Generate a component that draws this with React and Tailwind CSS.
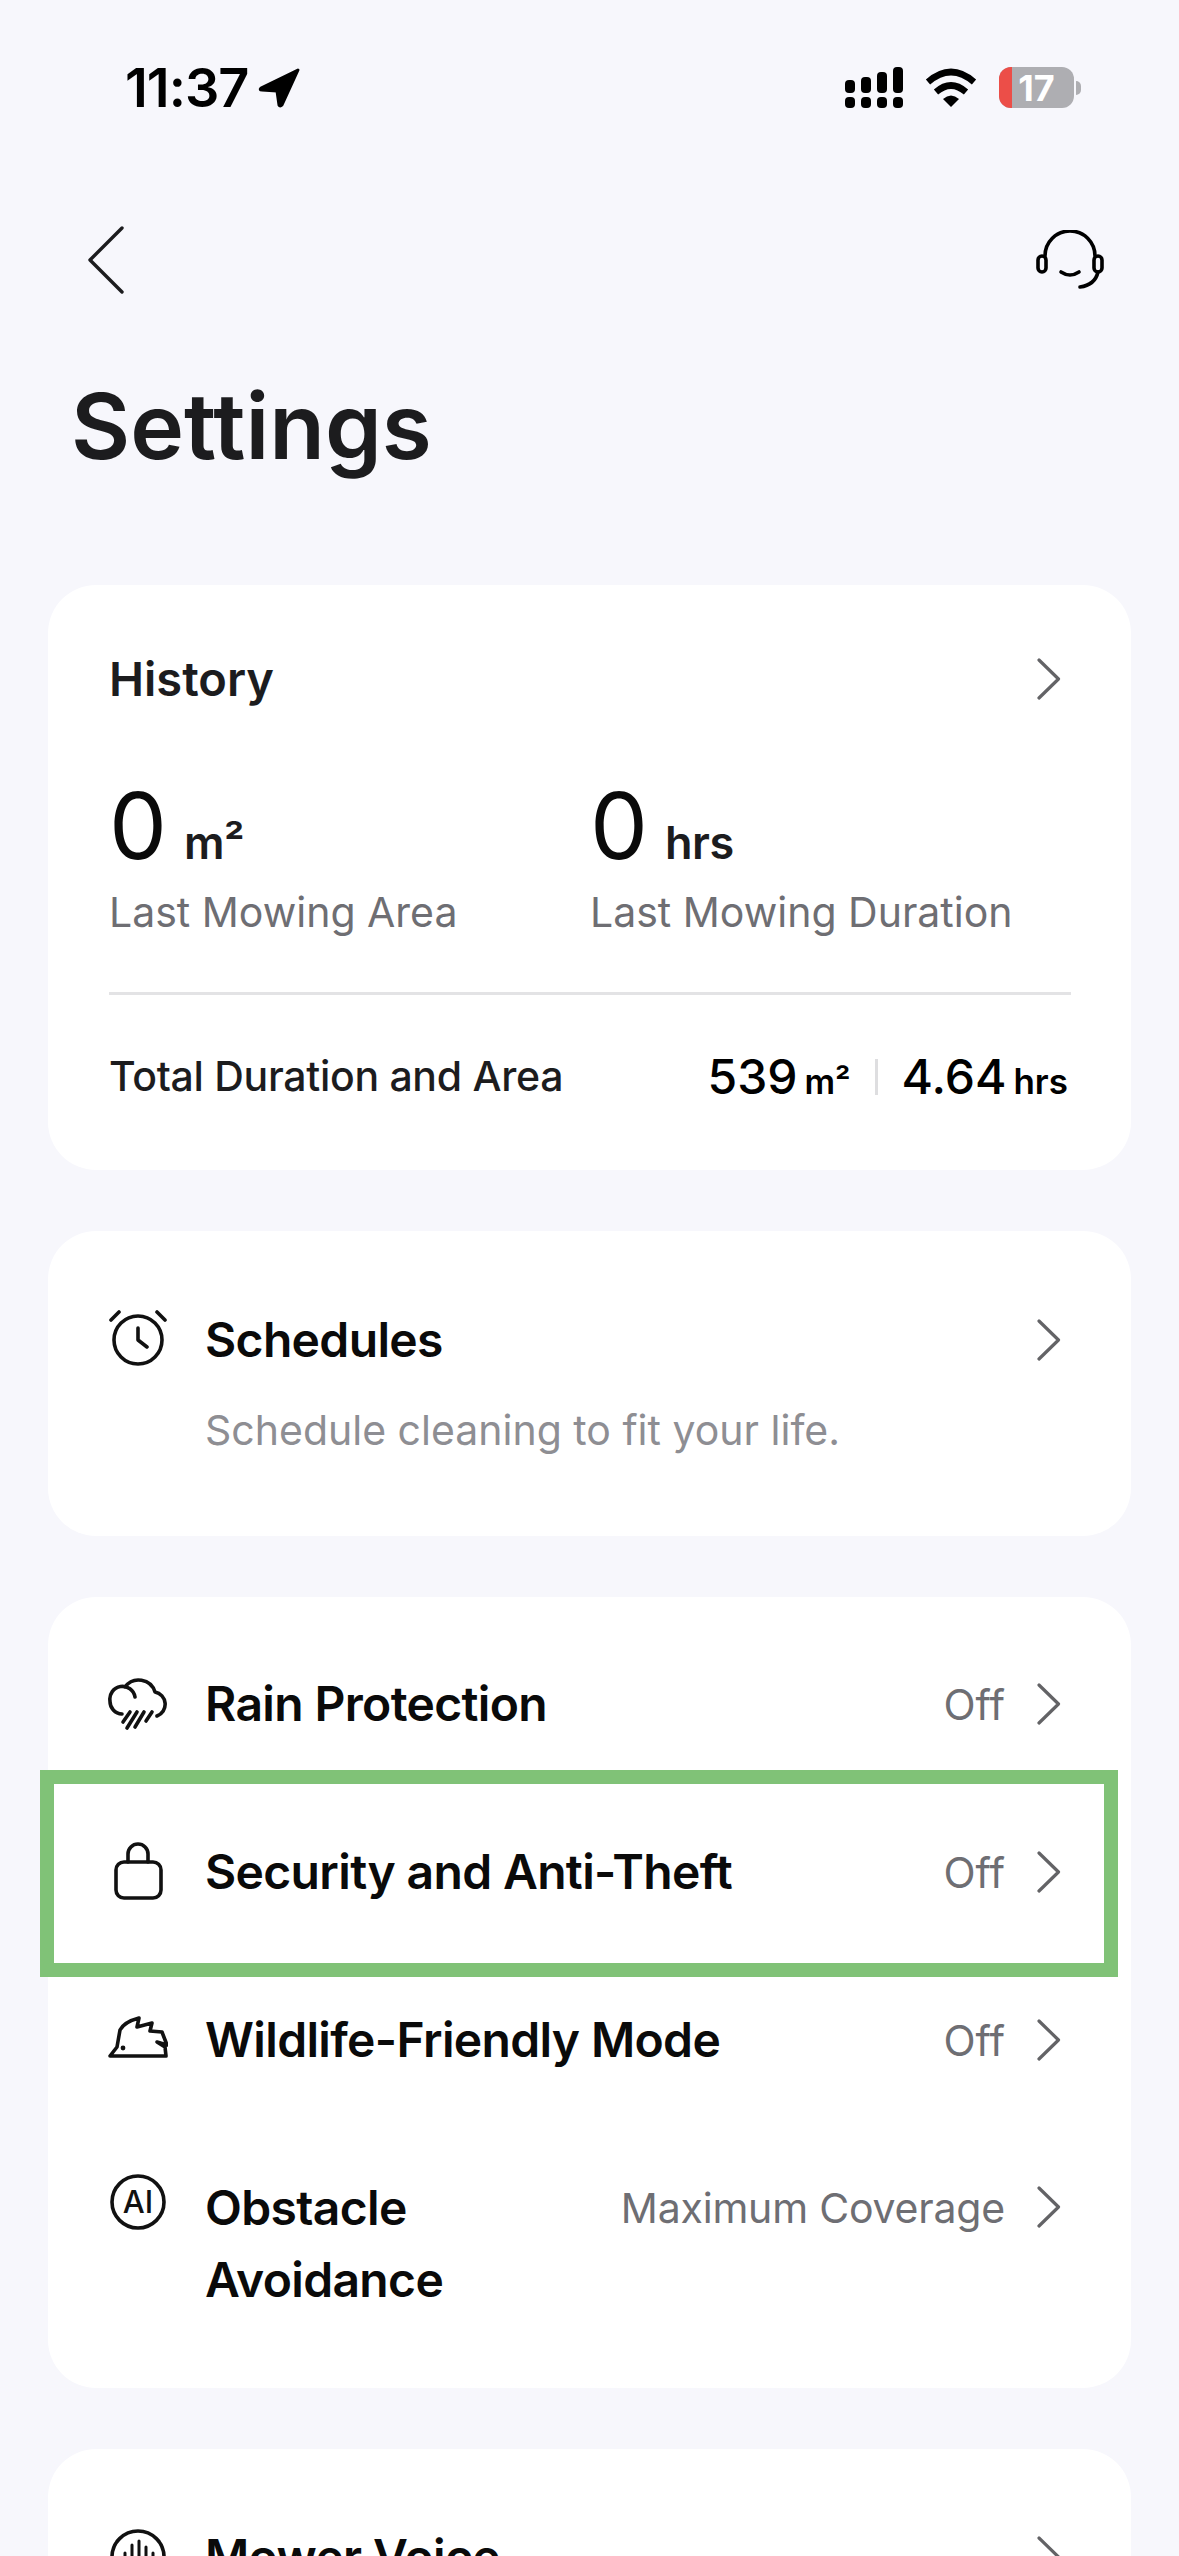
import React from "react";

const Chevron = ({ className = "" }) => (
  <svg width="26" height="42" viewBox="0 0 26 42" fill="none" className={"shrink-0 " + className}>
    <path d="M3 2 L22.5 21 L3 40" stroke="#636366" strokeWidth="3.2" strokeLinecap="round" strokeLinejoin="round" />
  </svg>
);

const I = ({ children }) => (
  <svg width="60" height="60" viewBox="0 0 60 60" fill="none" stroke="#111" strokeWidth="3.6" strokeLinecap="round" strokeLinejoin="round" className="shrink-0">
    {children}
  </svg>
);

const Alarm = () => (
  <I>
    <circle cx="30" cy="30" r="24" />
    <path d="M3 10 L11 2 M49 2 L57 10 M30 18 V30 L39 37" />
  </I>
);
const Rain = () => (
  <I>
    <path d="M14 40 A12.5 12.5 0 0 1 2 27 A12.5 12.5 0 0 1 27 23 M17 13 A17 17 0 0 1 47 18 A12.5 12.5 0 0 1 49 42" />
    <path d="M22 38 L15 48 M29 38 L19 54 M36 38 L27 53 M44 38 L38 47" />
  </I>
);
const Lock = () => (
  <I>
    <rect x="8" y="20" width="45" height="36" rx="8" />
    <path d="M20 20 V12 A10 10 0 0 1 40 12 V20" />
  </I>
);
const Hedgehog = () => (
  <I>
    <path d="M2 46 L9 37 L12 20 Q16 12 31 8 L29 17 L44 13 L42 21 L54 22 L59 35 L49 32 L57 37 L58 46 Z" />
    <circle cx="15" cy="38" r="2.4" fill="#111" stroke="none" />
  </I>
);
const Ai = () => (
  <svg width="60" height="60" viewBox="0 0 60 60" fill="none" className="shrink-0">
    <circle cx="30" cy="30" r="26" stroke="#111" strokeWidth="3.6" />
    <text x="30" y="41" textAnchor="middle" fontFamily="Inter" fontSize="31" fontWeight="500" fill="#111">AI</text>
  </svg>
);
const Voice = () => (
  <I>
    <circle cx="30" cy="30" r="26" />
    <path d="M17 26 V38 M24 18 V42 M31 14 V46 M38 20 V42 M45 26 V36" strokeWidth="3" />
  </I>
);

const Row = ({ icon, title, value }) => (
  <div className="flex h-[168px] items-center pl-[60px] pr-[69px]">
    {icon}
    <span className="ml-[37px] text-[48px] font-semibold leading-[72px] tracking-[-0.65px] text-[#0a0a0a]">{title}</span>
    <span className="ml-auto text-[42px] text-[#6e6e73]">{value}</span>
    <Chevron className="ml-[31px]" />
  </div>
);

const Stat = ({ n, u, label, cls }) => (
  <div className={cls}>
    <div className="flex h-[100px] items-baseline">
      <span className="text-[92px] font-normal leading-[100px] text-[#0a0a0a]">{n}</span>
      <span className="ml-[17px] text-[45px] font-semibold tracking-[-0.5px] text-[#1c1c1e]">{u}</span>
    </div>
    <div className="mt-[11px] text-[41px] leading-[50px] text-[#6e6e73]">{label}</div>
  </div>
);

export default function App() {
  return (
    <div className="relative h-[2556px] w-[1179px] overflow-hidden bg-[#f7f7fc] font-['Inter',sans-serif]">
      {/* status bar */}
      <div className="flex h-[174px] items-start justify-between pl-[125px] pr-[98px] pt-[62px]">
        <div className="flex items-center">
          <span className="text-[54px] font-semibold leading-[52px] tracking-[-1px] text-black">11:37</span>
          <svg width="42" height="40" viewBox="0 0 42 40" className="ml-[10px]">
            <path d="M40 2 L3 20 Q1 22 4 22 L19 23 L21 37 Q22 39 24 37 Z" fill="#000" stroke="#000" strokeWidth="3" strokeLinejoin="round" />
          </svg>
        </div>
        <div className="flex items-center pt-[5px]">
          <svg width="58" height="41" viewBox="0 0 58 41">
            <rect x="0" y="13" width="10" height="13" rx="4" />
            <rect x="16" y="10" width="10" height="16" rx="4" />
            <rect x="32" y="5" width="10" height="21" rx="4" />
            <rect x="48" y="0" width="10" height="26" rx="4" />
            <rect x="0" y="30" width="10" height="11" rx="4" />
            <rect x="16" y="30" width="10" height="11" rx="4" />
            <rect x="32" y="30" width="10" height="11" rx="4" />
            <rect x="48" y="30" width="10" height="11" rx="4" />
          </svg>
          <svg width="52" height="40" viewBox="0 0 52 40" fill="none" className="ml-[22px]">
            <path d="M3 14 Q26 -6 49 14" stroke="#000" strokeWidth="6.5" />
            <path d="M11 24 Q26 11 41 24" stroke="#000" strokeWidth="6.5" />
            <path d="M18 31 Q26 24 34 31 L26 39 Z" fill="#000" />
          </svg>
          <div className="relative ml-[22px] flex h-[41px] w-[75px] items-center justify-center overflow-hidden rounded-[12px] bg-[#aeaeb2]">
            <div className="absolute inset-y-0 left-0 w-[13px] bg-[#ec4e48]" />
            <span className="relative text-[36px] font-bold leading-none text-white">17</span>
          </div>
          <div className="ml-[2px] h-[14px] w-[5px] rounded-r-full bg-[#aeaeb2]" />
        </div>
      </div>

      {/* nav */}
      <div className="flex h-[160px] items-start justify-between pl-[88px] pr-[74px] pt-[52px]">
        <svg width="36" height="68" viewBox="0 0 36 68" fill="none">
          <path d="M34 2 L2 34 L34 66" stroke="#1c1c1e" strokeWidth="3.4" strokeLinecap="round" strokeLinejoin="round" />
        </svg>
        <svg width="70" height="60" viewBox="0 0 70 60" fill="none" stroke="#000" strokeWidth="3.6" strokeLinecap="round" className="mt-[4px]">
          <path d="M10 26 A25 25 0 0 1 60 26" />
          <rect x="3" y="26" width="8" height="16" rx="4" />
          <rect x="59" y="26" width="8" height="16" rx="4" />
          <path d="M26 42 Q35 48 44 42" />
          <path d="M63 42 Q60 55 45 57" />
        </svg>
      </div>

      {/* title */}
      <div className="h-[251px] pl-[71px] pt-[37px]">
        <h1 className="text-[91px] font-semibold leading-[110px] text-[#1c1c1e]">Settings</h1>
      </div>

      {/* cards */}
      <div className="flex flex-col gap-[61px] pl-[48px] pr-[48px]">
        <section className="h-[585px] rounded-[48px] bg-white pl-[61px] pr-[60px] pt-[64px]">
          <div className="flex h-[60px] items-center justify-between pr-[9px]">
            <span className="text-[47px] font-semibold text-[#1c1c1e]">History</span>
            <Chevron />
          </div>
          <div className="mt-[67px] flex">
            <Stat n="0" u="m²" label="Last Mowing Area" cls="w-[481px]" />
            <Stat n="0" u="hrs" label="Last Mowing Duration" cls="" />
          </div>
          <div className="mt-[55px] h-[3px] bg-[#e3e3e5]" />
          <div className="flex h-[164px] items-center">
            <span className="text-[41px] font-medium tracking-[-0.3px] text-[#1c1c1e]">Total Duration and Area</span>
            <div className="ml-auto flex items-baseline pr-[3px] text-black">
              <span className="text-[48px] font-medium">539</span>
              <span className="ml-[7px] text-[34px] font-semibold">m²</span>
              <span className="ml-[24px] mr-[24px] h-[36px] w-[3px] self-center bg-[#dedee0]" />
              <span className="text-[48px] font-medium">4.64</span>
              <span className="ml-[7px] text-[35px] font-semibold">hrs</span>
            </div>
          </div>
        </section>

        <section className="h-[305px] rounded-[48px] bg-white pl-[60px] pr-[69px] pt-[79px]">
          <div className="flex h-[60px] items-center">
            <Alarm />
            <span className="ml-[37px] text-[48px] font-semibold tracking-[-0.65px] text-[#0a0a0a]">Schedules</span>
            <Chevron className="ml-auto" />
          </div>
          <div className="ml-[97px] mt-[30px] text-[41px] text-[#8e8e93]">Schedule cleaning to fit your life.</div>
        </section>

        <section className="relative h-[791px] rounded-[48px] bg-white pt-[23px]">
          <Row icon={<Rain />} title="Rain Protection" value="Off" />
          <Row icon={<Lock />} title="Security and Anti-Theft" value="Off" />
          <Row icon={<Hedgehog />} title="Wildlife-Friendly Mode" value="Off" />
          <div className="flex items-start pl-[60px] pr-[69px] pt-[48px]">
            <Ai />
            <span className="ml-[37px] w-[300px] text-[48px] font-semibold leading-[72px] tracking-[-0.65px] text-[#0a0a0a]">Obstacle Avoidance</span>
            <span className="ml-auto pt-[6px] text-[41px] tracking-[-0.2px] text-[#6e6e73]">Maximum Coverage</span>
            <Chevron className="ml-[31px] mt-[14px]" />
          </div>
          {/* annotation frame */}
          <div className="absolute left-[-8px] top-[173px] h-[207px] w-[1078px] border-[14px] border-[#80c277]" />
        </section>

        <section className="h-[300px] rounded-[48px] bg-white pl-[60px] pr-[69px] pt-[78px]">
          <div className="flex h-[60px] items-center">
            <Voice />
            <span className="ml-[37px] text-[48px] font-semibold tracking-[-0.65px] text-[#0a0a0a]">Mower Voice</span>
            <Chevron className="ml-auto" />
          </div>
        </section>
      </div>
    </div>
  );
}
